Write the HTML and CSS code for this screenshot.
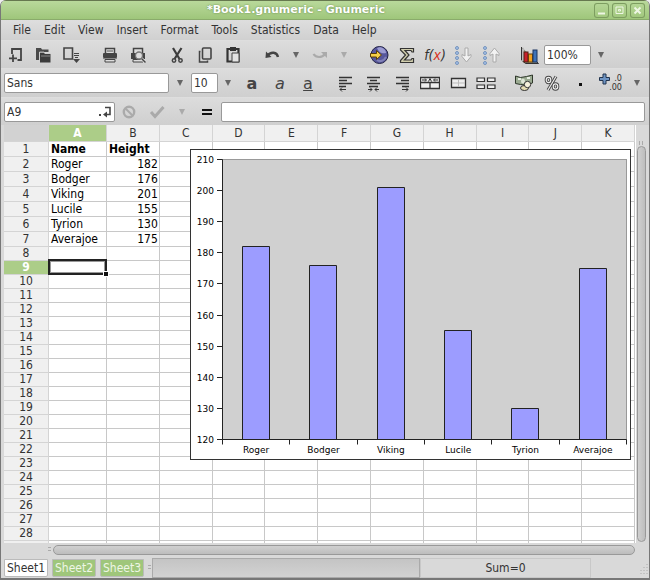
FILE: index.html
```
<!DOCTYPE html>
<html lang="en">
<head>
  <meta charset="UTF-8">
  <title>*Book1.gnumeric - Gnumeric</title>
  <link rel="stylesheet" href="styles.css">
</head>
<body>
<div class="window">
  <header class="titlebar">
    <h1>*Book1.gnumeric - Gnumeric</h1>
    <button class="win-btn" aria-label="Minimize"><svg width="15" height="15"><path d="M4 10.500h7" stroke="#eef6e4" stroke-width="2"/></svg></button>
    <button class="win-btn" aria-label="Maximize"><svg width="15" height="15"><path d="M4 4h7v6.500h-7z M6.500 6.500h2v1.500h-2z" fill="none" stroke="#eef6e4"/></svg></button>
    <button class="win-btn" aria-label="Close"><svg width="15" height="15"><path d="M4.500 4.500l6 6M10.500 4.500l-6 6" stroke="#eef6e4" stroke-width="2"/></svg></button>
  </header>

  <nav class="menubar">
    <button>File</button>
    <button>Edit</button>
    <button>View</button>
    <button>Insert</button>
    <button>Format</button>
    <button>Tools</button>
    <button>Statistics</button>
    <button>Data</button>
    <button>Help</button>
  </nav>

  <div class="toolbar standard">
    <div class="group">
      <button aria-label="New"><svg viewBox="0 0 20 20"><path d="M7 9V4h9v11h-3.500M8 9.500v7.500M4 13.300h8" fill="none" stroke="#444" stroke-width="1.800"/></svg></button>
      <button aria-label="Open"><svg viewBox="0 0 20 20"><path d="M3 3h5l1 1.500h6.500V7H6v8H3z" fill="#4a4a4a"/><path d="M7 7.500h4l1 1.500h5.500v8.500H7z" fill="#3c3c3c"/><path d="M6.500 15V7h4.500l1 1.500h5.500" fill="none" stroke="#ccc" stroke-width=".8"/><path d="M8 11h9" stroke="#888"/></svg></button>
      <button aria-label="Save"><svg viewBox="0 0 20 20"><path d="M3 3h8.500v11H3z" fill="none" stroke="#444" stroke-width="1.600"/><path d="M13 8.500h5M13 10.500h5M14 12.500h3" stroke="#444"/><path d="M12 14h7l-3.500 4z" fill="#444"/></svg></button>
    </div>
    <div class="group">
      <button aria-label="Print"><svg viewBox="0 0 20 20"><path d="M5.500 8V3.500h9V8" fill="#ddd" stroke="#444" stroke-width="1.500"/><path d="M7 6h6" stroke="#555"/><rect x="3" y="8" width="14" height="5" rx="1" fill="#444"/><path d="M5 14.500h10v2.500H5z" fill="#ddd" stroke="#444"/><path d="M3 13.500h14" stroke="#888"/></svg></button>
      <button aria-label="Print preview"><svg viewBox="0 0 20 20"><path d="M5.500 8V3.500h9V8" fill="#ddd" stroke="#444" stroke-width="1.500"/><path d="M3 8h14v6H3z" fill="#444"/><path d="M5 14.500h10v2.500H5z" fill="#ddd" stroke="#444"/><circle cx="11" cy="10.500" r="3.500" fill="#ddd" stroke="#777" stroke-width="1.300"/><path d="M13.500 13.500l4 4" stroke="#ddd" stroke-width="3"/><path d="M13.500 13.500l4 4" stroke="#444" stroke-width="1.500"/></svg></button>
    </div>
    <div class="group">
      <button aria-label="Cut"><svg viewBox="0 0 20 20"><path d="M6 3l6.500 11M14.500 3L7.500 14" stroke="#3c3c3c" stroke-width="2.200"/><circle cx="7" cy="15.500" r="1.700" fill="none" stroke="#444" stroke-width="1.500"/><circle cx="13.500" cy="15.500" r="1.700" fill="none" stroke="#444" stroke-width="1.500"/></svg></button>
      <button aria-label="Copy"><svg viewBox="0 0 20 20"><rect x="7.500" y="3" width="8.500" height="11" rx="1" fill="none" stroke="#444" stroke-width="1.600"/><path d="M5.500 6.500H4.500V17h8v-1.500" fill="none" stroke="#444" stroke-width="1.500"/></svg></button>
      <button aria-label="Paste"><svg viewBox="0 0 20 20"><path d="M4.500 4h11v12.500h-11z" fill="none" stroke="#333" stroke-width="2.200"/><path d="M7 2h6v4H7z" fill="#333"/><path d="M9 8h7v9H9z" fill="#e4e4e4" stroke="#444"/></svg></button>
    </div>
    <div class="group">
      <button aria-label="Undo"><svg viewBox="0 0 20 20"><path d="M5 11C9 6 15 7 16 12" fill="none" stroke="#444" stroke-width="2.400"/><path d="M4 6.500l-.5 6.500 6-1z" fill="#444"/></svg></button>
      <button class="drop" aria-label="Undo history"></button>
      <button aria-label="Redo" disabled><svg viewBox="0 0 20 20"><path d="M3.500 9C6 13 12 13 15 9" fill="none" stroke="#aaa" stroke-width="2.200"/><path d="M11 7h6v6z" fill="#aaa"/></svg></button>
      <button class="drop" aria-label="Redo history" disabled></button>
    </div>
    <div class="group">
      <button aria-label="Hyperlink"><svg viewBox="0 0 20 20"><circle cx="10.500" cy="10" r="8.500" fill="#57579c" stroke="#222244"/><path d="M8 3c4-2 9 1 9 5-3 1-7 0-9-5z" fill="#9c9cd2"/><path d="M8 15c3 2 7 1 9-3" fill="none" stroke="#8181b8" stroke-width="2"/><path d="M1.500 8.500h6V5.500l5 4.500-5 4.500V12h-6z" fill="#f6cf48" stroke="#5a3c08"/></svg></button>
      <button aria-label="Sum"><svg viewBox="0 0 20 20"><path d="M3.500 3.500h13V7h-1.500l-1-1.500H8l4 4.500-4.500 5H14l1-1.500h1.500v4h-13v-2l5-5.500-5-5z" fill="#d2cfae" stroke="#333" stroke-width="1.200"/></svg></button>
      <button class="fx" aria-label="Insert function"><i>f(<span>x</span>)</i></button>
      <button aria-label="Sort ascending"><svg viewBox="0 0 20 20"><g fill="#a8c4e8" stroke="#6285b5" stroke-width=".8"><circle cx="4" cy="3" r="1.500"/><circle cx="4" cy="8" r="1.500"/><circle cx="4" cy="13" r="1.500"/><circle cx="4" cy="18" r="1.500"/></g><path d="M12 3h3v8l3-1.500v2L13.500 17 9 11.500v-2l3 1.500z" fill="#f2f2f2" stroke="#aaa"/></svg></button>
      <button aria-label="Sort descending"><svg viewBox="0 0 20 20"><g fill="#a8c4e8" stroke="#6285b5" stroke-width=".8"><circle cx="4" cy="3" r="1.500"/><circle cx="4" cy="8" r="1.500"/><circle cx="4" cy="13" r="1.500"/><circle cx="4" cy="18" r="1.500"/></g><path d="M12 17h3V9l3 1.500v-2L13.500 3 9 8.500v2l3-1.500z" fill="#f2f2f2" stroke="#aaa"/></svg></button>
    </div>
    <div class="group">
      <button aria-label="Insert chart"><svg viewBox="0 0 20 20"><path d="M1.500 2v13l4 3.500h13L15 15" fill="#8a8a80" stroke="#333"/><path d="M2 4l2-1.500V16H2z" fill="#bbb"/><rect x="4" y="7" width="4" height="10" fill="#c8202c" stroke="#521"/><rect x="8.500" y="9" width="4" height="8" fill="#f2a01e" stroke="#6b4208"/><rect x="13" y="5" width="4" height="12" fill="#3f73b8" stroke="#1c3560"/></svg></button>
      <input class="zoom" type="text" value="100%" aria-label="Zoom">
      <button class="drop" aria-label="Zoom levels"></button>
    </div>
  </div>

  <div class="toolbar format">
    <div class="group">
      <input class="font-name" type="text" value="Sans" aria-label="Font">
      <button class="drop wide" aria-label="Fonts"></button>
      <input class="font-size" type="text" value="10" aria-label="Font size">
      <button class="drop" aria-label="Font sizes"></button>
      <button class="letter" aria-label="Bold"><b>a</b></button>
      <button class="letter" aria-label="Italic"><i>a</i></button>
      <button class="letter" aria-label="Underline"><u>a</u></button>
    </div>
    <div class="group">
      <button aria-label="Align left"><svg viewBox="0 0 20 20"><path d="M3 4.500h13M3 7.500h8M3 10.500h13M3 13.500h7" stroke="#333" stroke-width="1.400"/><path d="M4 16.500h6M6 14.500l-2 2 2 2" fill="none" stroke="#333"/></svg></button>
      <button aria-label="Align center"><svg viewBox="0 0 20 20"><path d="M3 4.500h13M6 7.500h7M3 10.500h13M5 13.500h9" stroke="#333" stroke-width="1.400"/><path d="M4 16.500h4M11 16.500h4M6 14.500l2 2-2 2M13 14.500l-2 2 2 2" fill="none" stroke="#333"/></svg></button>
      <button aria-label="Align right"><svg viewBox="0 0 20 20"><path d="M4 4.500h13M9 7.500h8M4 10.500h13M10 13.500h7" stroke="#333" stroke-width="1.400"/><path d="M10 16.500h6M14 14.500l2 2-2 2" fill="none" stroke="#333"/></svg></button>
      <button aria-label="Center across selection"><svg viewBox="0 0 20 20"><path d="M.5 4.500h19v11H.5zM.5 9.500h19M10 9.500v6" fill="#eee" stroke="#333" stroke-width="1.300"/><path d="M2 7h4M14 7h4M5 5.500L6.500 7 5 8.500M15 5.500L13.500 7 15 8.500M8.500 8.500l1.500-3 1.500 3" fill="none" stroke="#333"/></svg></button>
      <button aria-label="Merge cells"><svg viewBox="0 0 20 20"><path d="M3.500 5.500h14v9h-14z" fill="#eee" stroke="#333" stroke-width="1.300"/><path d="M10.500 6v8M4 10h13" stroke="#bbb"/></svg></button>
      <button aria-label="Split cells"><svg viewBox="0 0 20 20"><path d="M1 5h7.500v3.500H1zM11.500 5H19v3.500h-7.500zM1 12h7.500v3.500H1zM11.500 12H19v3.500h-7.500z" fill="#eee" stroke="#333" stroke-width="1.200"/></svg></button>
    </div>
    <div class="group">
      <button aria-label="Currency"><svg viewBox="0 0 20 20"><path d="M1.500 3l5 1.500 6-1 6-1.500v8l-6 2-6-.5-5-1z" fill="#9bab92" stroke="#2f382b"/><path d="M4 6h3M13 5h3" stroke="#e8eee2" stroke-width="2"/><ellipse cx="9" cy="8" rx="2" ry="2.500" fill="#dfe6d7"/><ellipse cx="10.500" cy="15" rx="4" ry="2.500" fill="#e8dfb4" stroke="#333"/><circle cx="13.500" cy="11.500" r="3.200" fill="#f7f2dc" stroke="#333"/></svg></button>
      <button aria-label="Percentage"><svg viewBox="0 0 20 20"><g fill="none" stroke="#444" stroke-width="3"><ellipse cx="6.500" cy="7" rx="2.300" ry="2.700"/><ellipse cx="13.500" cy="13.500" rx="2.300" ry="2.700"/><path d="M14 3.500L6 17"/></g><g fill="none" stroke="#eee" stroke-width="1.200"><ellipse cx="6.500" cy="7" rx="2.300" ry="2.700"/><ellipse cx="13.500" cy="13.500" rx="2.300" ry="2.700"/><path d="M14 3.500L6 17"/></g></svg></button>
      <button aria-label="Thousands separator"><svg viewBox="0 0 20 20"><rect x="9" y="10" width="3" height="3" fill="#111"/></svg></button>
      <button class="decimals" aria-label="Increase decimals"><svg viewBox="0 0 20 20"><path d="M5 1h3v3.500h3.500v3H8V11H5V7.500H1.500v-3H5z" fill="#6f95c4" stroke="#22344e"/></svg><span>.0<br>.00</span></button>
    </div>
    <button class="drop overflow" aria-label="More"></button>
  </div>

  <div class="toolbar formula">
    <div class="cell-name">
      <input type="text" value="A9" aria-label="Cell">
      <svg width="14" height="12" viewBox="0 0 14 12"><path d="M7 1.500h5v7H7" fill="none" stroke="#444" stroke-width="1.600"/><path d="M9 5.500v6l-4-3z" fill="#444"/><rect x="1" y="8" width="2" height="2" fill="#444"/></svg>
    </div>
    <button aria-label="Cancel" disabled><svg viewBox="0 0 20 20"><circle cx="10" cy="10" r="5.200" fill="none" stroke="#aaa" stroke-width="2.400"/><path d="M6.500 6.500l7 7" stroke="#aaa" stroke-width="2"/></svg></button>
    <button aria-label="Accept" disabled><svg viewBox="0 0 20 20"><path d="M4 10l4 4.500L16.500 5" fill="none" stroke="#aaa" stroke-width="3"/></svg></button>
    <button class="drop wide" aria-label="Accept options" disabled></button>
    <button aria-label="Enter formula"><svg viewBox="0 0 20 20"><path d="M5 8h10M5 12h10" stroke="#111" stroke-width="2"/></svg></button>
    <input class="entry" type="text" aria-label="Formula">
  </div>

  <main class="work">
    <div class="sheet">
      <table class="grid">
        <thead><tr id="cols"><th class="corner"></th></tr></thead>
        <tbody id="rows"></tbody>
      </table>
      <svg class="chart" id="chart" viewBox="0 0 441 311" role="img" aria-label="Height by name"></svg>
    </div>
    <div class="vscroll"><div class="grip"></div><div class="thumb"></div></div>
  </main>
  <div class="hscroll"><div class="grip"></div><div class="thumb"></div></div>

  <footer class="bottom">
    <button class="tab active">Sheet1</button>
    <button class="tab">Sheet2</button>
    <button class="tab">Sheet3</button>
    <div class="grip"></div>
    <div class="progress"></div>
    <div class="sum">Sum=0</div>
    <svg class="resize" width="12" height="12"><path d="M10 2v10M7 5v7M4 8v4" stroke="#aaa" stroke-dasharray="1 2"/></svg>
  </footer>
</div>

<script>
  const data = [
    ['Roger', 182],
    ['Bodger', 176],
    ['Viking', 201],
    ['Lucile', 155],
    ['Tyrion', 130],
    ['Averajoe', 175]
  ];
  const columns = 'ABCDEFGHIJK'.split('');

  // column headers
  columns.forEach(c => {
    const cls = c === 'A' ? 'first selected' : '';
    document.getElementById('cols').innerHTML += `<th class="${cls}" scope="col">${c}</th>`;
  });

  // rows, the last one is an empty strip above the scrollbar
  let html = '';
  for (let r = 1; r <= 29; r++) {
    const item = data[r - 2];
    html += `<tr class="${r < 8 ? 'tall' : ''}"><th scope="row" class="${r === 9 ? 'selected' : ''}">${r < 29 ? r : ''}</th>`;
    columns.forEach((c, i) => {
      let text = '';
      if (r === 1 && i < 2) text = ['Name', 'Height'][i];
      if (item && i < 2) text = item[i];
      const cls = [];
      if (r === 1) cls.push('head');
      if (item && i === 1) cls.push('num');
      if (r === 9 && i === 0) cls.push('cursor');
      html += `<td class="${cls.join(' ')}">${text}</td>`;
    });
    html += '</tr>';
  }
  document.getElementById('rows').innerHTML = html;

  // chart
  const left = 32.5, right = 436.5, top_ = 10.5, bottom = 290.5;
  const y = v => Math.floor(bottom - (v - 120) * (bottom - top_) / 90) + 0.5;
  const step = (right - left) / data.length;
  let svg = '<rect class="paper" x=".5" y=".5" width="440" height="310"/>';
  svg += `<rect class="plot" x="${left}" y="${top_}" width="${right - left}" height="${bottom - top_}"/>`;
  data.forEach(([name, value], i) => {
    const x = Math.round(left + step * i + step / 2 - 14.1) + 0.5;
    svg += `<path class="bar" d="M${x} ${y(120)}V${y(value)}h27V${y(120)}"/>`;
    svg += `<text class="cat" x="${left + step * (i + 0.5)}" y="304">${name}</text>`;
  });
  svg += `<path class="axis" d="M${left} ${y(210)}V${y(120)}H${right}"/>`;
  for (let v = 120; v <= 210; v += 10) {
    svg += `<path class="axis" d="M27 ${y(v)}H${left}"/><text class="val" x="24" y="${y(v) + 3.5}">${v}</text>`;
  }
  for (let i = 0; i <= data.length; i++) {
    const x = Math.round(left + step * i - 0.5) + 0.5;
    svg += `<path class="axis" d="M${x} ${y(120)}v5"/>`;
  }
  document.getElementById('chart').innerHTML = svg;
</script>
</body>
</html>
```
FILE: styles.css
```
* {
  box-sizing: border-box;
}
body {
  margin: 0;
  background: #eee;
  font-family: "DejaVu Sans Condensed", "DejaVu Sans", sans-serif;
  font-size: 12px;
  color: #333;
}
button, input {
  font: inherit;
  color: inherit;
}
button {
  padding: 0;
  border: 0;
  background: none;
}
.window {
  display: flex;
  flex-direction: column;
  height: 100vh;
  background: #d9d9d9;
  border: 1px solid #777;
  border-top: 0;
  border-bottom: 2px solid #777;
  border-radius: 6px 6px 0 0;
  overflow: hidden;
}

/* title */
.titlebar {
  display: flex;
  align-items: center;
  gap: 3px;
  flex: 0 0 20px;
  padding-right: 4px;
  background: linear-gradient(#b9d99b, #9fc67b);
  border-top: 1px solid #66784f;
  border-bottom: 1px solid #8aab6b;
}
.titlebar h1 {
  flex: 1;
  margin: 0;
  font-family: "DejaVu Sans", sans-serif;
  font-size: 11px;
  line-height: 18px;
  text-align: center;
  color: #fff;
  text-shadow: 0 0 2px #5f8044;
}
.win-btn {
  width: 15px;
  height: 15px;
  border-radius: 3px;
  box-shadow: inset 0 0 0 1px #7d9d60;
}
.win-btn svg {
  display: block;
}

/* menu */
.menubar {
  display: flex;
  gap: 13px;
  flex: 0 0 20px;
  padding-left: 12px;
  background: linear-gradient(#dedede, #d0d0d0);
}

/* toolbars */
.toolbar {
  display: flex;
  align-items: center;
  flex: 0 0 28px;
  background: linear-gradient(#dcdcdc, #cfcfcf);
  border-top: 1px solid #dedede;
}
.group {
  display: flex;
  align-items: center;
}
.toolbar button {
  display: flex;
  align-items: center;
  justify-content: center;
  flex: 0 0 28px;
  height: 24px;
}
.toolbar button svg {
  width: 20px;
  height: 20px;
}
.toolbar input {
  height: 20px;
  padding: 0 2px;
  background: #fff;
  border: 1px solid #999;
  border-radius: 2px;
}
.toolbar .drop {
  flex-basis: 20px;
}
.toolbar .wide {
  flex-basis: 22px;
}
.drop::before {
  content: "";
  border: 3px solid transparent;
  border-top: 6px solid #666;
  border-bottom: 0;
}
.drop:disabled::before {
  border-top-color: #aaa;
}
.standard {
  gap: 11px;
}
.fx i {
  font-size: 14px;
}
.fx span {
  color: #d8301c;
}
.toolbar .zoom {
  width: 47px;
}
.format {
  flex-basis: 29px;
  gap: 10px;
  padding: 0 7px 0 3px;
}
.toolbar .font-name {
  width: 165px;
}
.toolbar .font-size {
  width: 27px;
}
.letter {
  font-family: "DejaVu Sans", sans-serif;
  font-size: 16px;
  color: #444;
}
.decimals {
  position: relative;
}
.decimals span {
  position: absolute;
  right: 0;
  top: 3px;
  font-size: 9px;
  line-height: 9px;
  text-align: right;
}
.toolbar .overflow {
  flex-basis: 10px;
  margin-left: auto;
}
.formula {
  padding: 0 4px 0 3px;
}
.cell-name {
  position: relative;
  display: flex;
  width: 111px;
}
.cell-name input {
  width: 100%;
}
.cell-name svg {
  position: absolute;
  right: 3px;
  top: 4px;
}
.toolbar .entry {
  flex: 1;
  min-width: 0;
}

/* sheet */
.work {
  display: flex;
  flex: 1;
  min-height: 0;
  padding-left: 3px;
}
.sheet {
  position: relative;
  flex: 1;
  overflow: hidden;
  background: #fff;
  padding-right: 1px;
}
.grid {
  width: 100%;
  table-layout: fixed;
  border-collapse: separate;
  border-spacing: 0;
  color: #000;
}
.grid th, .grid td {
  height: 14px;
  padding: 0 2px;
  line-height: 13px;
  border-right: 1px solid #c8c8c8;
  border-bottom: 1px solid #c8c8c8;
  white-space: nowrap;
}
.grid .tall > * {
  height: 15px;
  line-height: 14px;
}
.grid th {
  background: #f0f0f0;
  border-color: #d4d4d4;
  color: #333;
  font-weight: normal;
}
.grid thead th {
  height: 17px;
  line-height: 16px;
}
.grid .corner {
  width: 45px;
  background: #d2d2d2;
}
.grid .first {
  width: 58px;
}
.grid .selected {
  background: #accd88;
  color: #fff;
  font-weight: bold;
}
.grid .head {
  font-weight: bold;
}
.grid .num {
  padding-right: 1px;
  text-align: right;
}
.grid .cursor {
  position: relative;
}
.cursor::before {
  content: "";
  position: absolute;
  inset: -2px -1px -1px -1px;
  border: 2px solid #222;
  box-shadow: inset 0 0 0 1px #999;
}
.cursor::after {
  content: "";
  position: absolute;
  right: -2px;
  bottom: -2px;
  width: 4px;
  height: 4px;
  background: #111;
  box-shadow: 0 0 0 1px #fff;
}

/* chart */
.chart {
  position: absolute;
  left: 186px;
  top: 24px;
  width: 441px;
  height: 311px;
  font-family: "DejaVu Sans", sans-serif;
  font-size: 9px;
}
.paper {
  fill: #fff;
  stroke: #333;
}
.plot {
  fill: #d0d0d0;
  stroke: #999;
}
.bar {
  fill: #9c9cff;
  stroke: #222;
}
.axis {
  fill: none;
  stroke: #222;
}
.cat {
  text-anchor: middle;
}
.val {
  text-anchor: end;
}

/* scrollbars */
.grip {
  background: repeating-linear-gradient(#aaa 0 1px, transparent 1px 3px);
}
.thumb {
  flex: 1;
  border: 1px solid #999;
  border-radius: 5px;
  background: linear-gradient(#d0d0d0, #bdbdbd);
}
.vscroll {
  display: flex;
  flex-direction: column;
  align-items: center;
  gap: 1px;
  flex: 0 0 13px;
  padding: 16px 3px 1px 1px;
}
.vscroll .grip {
  width: 6px;
  height: 4px;
  background: repeating-linear-gradient(90deg, #aaa 0 1px, transparent 1px 3px);
}
.vscroll .thumb {
  width: 9px;
  background: linear-gradient(90deg, #d0d0d0, #bdbdbd);
}
.hscroll {
  display: flex;
  align-items: center;
  gap: 2px;
  flex: 0 0 14px;
  padding: 0 14px 0 47px;
}
.hscroll .grip {
  width: 3px;
  height: 6px;
}
.hscroll .thumb {
  height: 10px;
}

/* tabs and status */
.bottom {
  display: flex;
  align-items: center;
  flex: 0 0 21px;
  padding-left: 3px;
}
.tab {
  width: 44px;
  height: 18px;
  margin-right: 4px;
  background: #9fc67b;
  color: #eef6e6;
  border: 1px solid #bbb;
  border-radius: 0 0 2px 2px;
}
.tab.active {
  background: #fff;
  color: #333;
}
.bottom .grip {
  width: 3px;
  height: 6px;
  margin-right: 1px;
}
.progress {
  flex: 1;
  height: 20px;
  background: linear-gradient(#c4c4c4, #d2d2d2);
  border: 1px solid #aaa;
}
.sum {
  width: 171px;
  height: 20px;
  line-height: 18px;
  text-align: center;
  border: 1px solid #c8c8c8;
}
.resize {
  margin-left: 46px;
}
```
